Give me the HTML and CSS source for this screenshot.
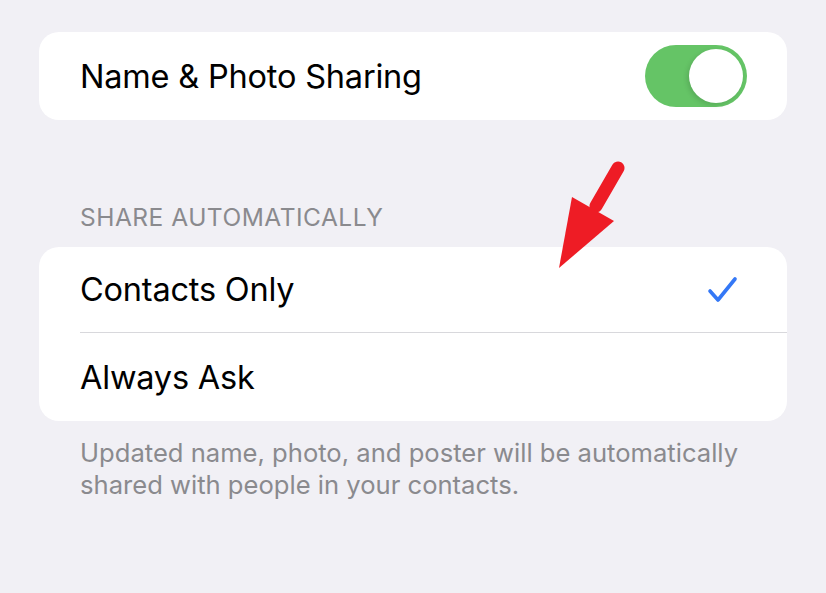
FILE: index.html
```html
<!DOCTYPE html>
<html lang="en">
<head>
    <meta charset="UTF-8">
    <meta name="viewport" content="width=device-width, initial-scale=1.0">
    <title>Name &amp; Photo Sharing</title>
    <link rel="stylesheet" href="styles.css">
</head>
<body>
    <div class="page">
        <div class="group">
            <div class="row">
                <span class="label">Name &amp; Photo Sharing</span>
                <div class="switch on"><div class="knob"></div></div>
            </div>
        </div>

        <div class="section-title">SHARE AUTOMATICALLY</div>
        <div class="group">
            <div class="row divided">
                <span class="label">Contacts Only</span>
                <svg class="check" width="32" height="28" viewBox="0 0 32 28">
                    <path d="M3 15 L11 24 L28 3" fill="none" stroke="#3478f6" stroke-width="3.6" stroke-linecap="round" stroke-linejoin="round"/>
                </svg>
            </div>
            <div class="row">
                <span class="label">Always Ask</span>
            </div>
        </div>
        <p class="footer">Updated name, photo, and poster will be automatically shared with people in your contacts.</p>

        <!-- annotation arrow -->
        <svg class="arrow" width="80" height="120" viewBox="0 0 80 120">
            <line x1="68" y1="8" x2="46" y2="46" stroke="#ee1c25" stroke-width="13" stroke-linecap="round"/>
            <polygon points="22,37 64,61 9,108" fill="#ee1c25"/>
        </svg>
    </div>
</body>
</html>
```

FILE: styles.css
```css
* { box-sizing: border-box; margin: 0; padding: 0; }
body { background: #f1f0f5; font-family: 'Inter', 'Liberation Sans', sans-serif; color: #000; overflow: hidden; }

.page { position: relative; padding: 32px 39px 0 39px; width: 826px; height: 593px; }

.group { background: #fff; border-radius: 20px; overflow: hidden; }
.row { height: 88px; display: flex; align-items: center; justify-content: space-between; margin-left: 41px; padding-right: 41px; }
.row.divided { height: 86px; border-bottom: 1px solid #d8d8dc; }
.label { font-size: 32.5px; letter-spacing: -0.2px; }

.switch { width: 102px; height: 62px; border-radius: 31px; background: #e9e9eb; position: relative; margin-right: -1px; }
.switch.on { background: #65c466; }
.knob { position: absolute; top: 4px; right: 4px; width: 54px; height: 54px; border-radius: 50%; background: #fff; box-shadow: -2px 2px 5px rgba(0, 0, 0, 0.12); }

.check { margin-right: 7px; }

.section-title { margin: 82px 0 15px 41px; font-size: 24.5px; line-height: 30px; color: #8a8a8e; letter-spacing: 0.5px; }

.footer { margin: 16px 0 0 41px; font-size: 25.6px; line-height: 32px; color: #8a8a8e; max-width: 690px; }

.arrow { position: absolute; left: 550px; top: 160px; }
```
